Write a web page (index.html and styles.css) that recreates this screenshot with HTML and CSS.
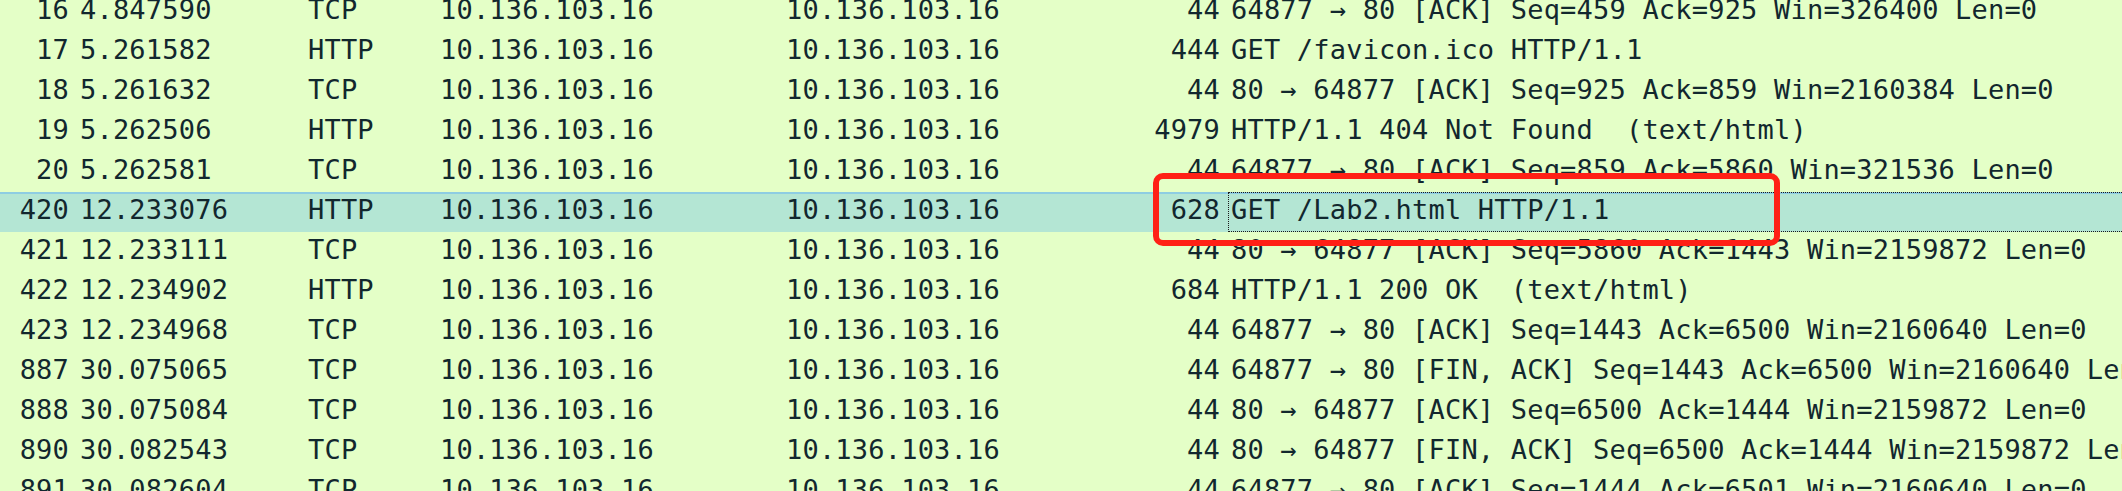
FILE: index.html
```html
<!DOCTYPE html>
<html>
<head>
<meta charset="utf-8">
<link rel="stylesheet" href="styles.css">
</head>
<body>
<div class="viewport">
  <div class="list">
    <div class="row"><span class="no">16</span><span class="time">4.847590</span><span class="proto">TCP</span><span class="src">10.136.103.16</span><span class="dst">10.136.103.16</span><span class="len">44</span><span class="info">64877 → 80 [ACK] Seq=459 Ack=925 Win=326400 Len=0</span></div>
    <div class="row"><span class="no">17</span><span class="time">5.261582</span><span class="proto">HTTP</span><span class="src">10.136.103.16</span><span class="dst">10.136.103.16</span><span class="len">444</span><span class="info">GET /favicon.ico HTTP/1.1</span></div>
    <div class="row"><span class="no">18</span><span class="time">5.261632</span><span class="proto">TCP</span><span class="src">10.136.103.16</span><span class="dst">10.136.103.16</span><span class="len">44</span><span class="info">80 → 64877 [ACK] Seq=925 Ack=859 Win=2160384 Len=0</span></div>
    <div class="row"><span class="no">19</span><span class="time">5.262506</span><span class="proto">HTTP</span><span class="src">10.136.103.16</span><span class="dst">10.136.103.16</span><span class="len">4979</span><span class="info">HTTP/1.1 404 Not Found  (text/html)</span></div>
    <div class="row"><span class="no">20</span><span class="time">5.262581</span><span class="proto">TCP</span><span class="src">10.136.103.16</span><span class="dst">10.136.103.16</span><span class="len">44</span><span class="info">64877 → 80 [ACK] Seq=859 Ack=5860 Win=321536 Len=0</span></div>
    <div class="row selected"><span class="no">420</span><span class="time">12.233076</span><span class="proto">HTTP</span><span class="src">10.136.103.16</span><span class="dst">10.136.103.16</span><span class="len">628</span><span class="info focus">GET /Lab2.html HTTP/1.1</span></div>
    <div class="row"><span class="no">421</span><span class="time">12.233111</span><span class="proto">TCP</span><span class="src">10.136.103.16</span><span class="dst">10.136.103.16</span><span class="len">44</span><span class="info">80 → 64877 [ACK] Seq=5860 Ack=1443 Win=2159872 Len=0</span></div>
    <div class="row"><span class="no">422</span><span class="time">12.234902</span><span class="proto">HTTP</span><span class="src">10.136.103.16</span><span class="dst">10.136.103.16</span><span class="len">684</span><span class="info">HTTP/1.1 200 OK  (text/html)</span></div>
    <div class="row"><span class="no">423</span><span class="time">12.234968</span><span class="proto">TCP</span><span class="src">10.136.103.16</span><span class="dst">10.136.103.16</span><span class="len">44</span><span class="info">64877 → 80 [ACK] Seq=1443 Ack=6500 Win=2160640 Len=0</span></div>
    <div class="row"><span class="no">887</span><span class="time">30.075065</span><span class="proto">TCP</span><span class="src">10.136.103.16</span><span class="dst">10.136.103.16</span><span class="len">44</span><span class="info">64877 → 80 [FIN, ACK] Seq=1443 Ack=6500 Win=2160640 Len=0</span></div>
    <div class="row"><span class="no">888</span><span class="time">30.075084</span><span class="proto">TCP</span><span class="src">10.136.103.16</span><span class="dst">10.136.103.16</span><span class="len">44</span><span class="info">80 → 64877 [ACK] Seq=6500 Ack=1444 Win=2159872 Len=0</span></div>
    <div class="row"><span class="no">890</span><span class="time">30.082543</span><span class="proto">TCP</span><span class="src">10.136.103.16</span><span class="dst">10.136.103.16</span><span class="len">44</span><span class="info">80 → 64877 [FIN, ACK] Seq=6500 Ack=1444 Win=2159872 Len=0</span></div>
    <div class="row"><span class="no">891</span><span class="time">30.082604</span><span class="proto">TCP</span><span class="src">10.136.103.16</span><span class="dst">10.136.103.16</span><span class="len">44</span><span class="info">64877 → 80 [ACK] Seq=1444 Ack=6501 Win=2160640 Len=0</span></div>
  </div>
  <div class="annotation"></div>
</div>
</body>
</html>
```

FILE: styles.css
```css
html, body {
  margin: 0;
  padding: 0;
  background: #e4ffc7;
  overflow: hidden;
}

.viewport {
  position: relative;
  width: 2122px;
  height: 491px;
  overflow: hidden;
}

.list {
  margin-top: -8px;
  font-family: "DejaVu Sans Mono", "Liberation Mono", monospace;
  font-size: 27px;
  letter-spacing: 0.2px;
  color: #12272e;
}

.row {
  display: grid;
  grid-template-columns: 72px 228px 132px 346px 222px 228px 1fr;
  height: 40px;
  line-height: 35px;
  white-space: pre;
}

.row > span {
  overflow: hidden;
  display: block;
  height: 40px;
  box-sizing: border-box;
}

.no {
  text-align: right;
  padding-right: 3px;
}

.time, .proto, .src, .dst {
  padding-left: 8px;
}

.len {
  text-align: right;
  padding-right: 8px;
}

.info {
  padding-left: 3px;
}

.selected {
  background: #b4e6d4;
  box-shadow: inset 0 2px 0 #8ecde2;
}

.focus {
  outline: 1px dotted #1b1b1b;
  outline-offset: -1px;
  margin-right: -2px;
}

.annotation {
  position: absolute;
  left: 1153px;
  top: 173px;
  width: 627px;
  height: 73px;
  box-sizing: border-box;
  border: 6px solid #ff2016;
  border-radius: 10px;
}
```
